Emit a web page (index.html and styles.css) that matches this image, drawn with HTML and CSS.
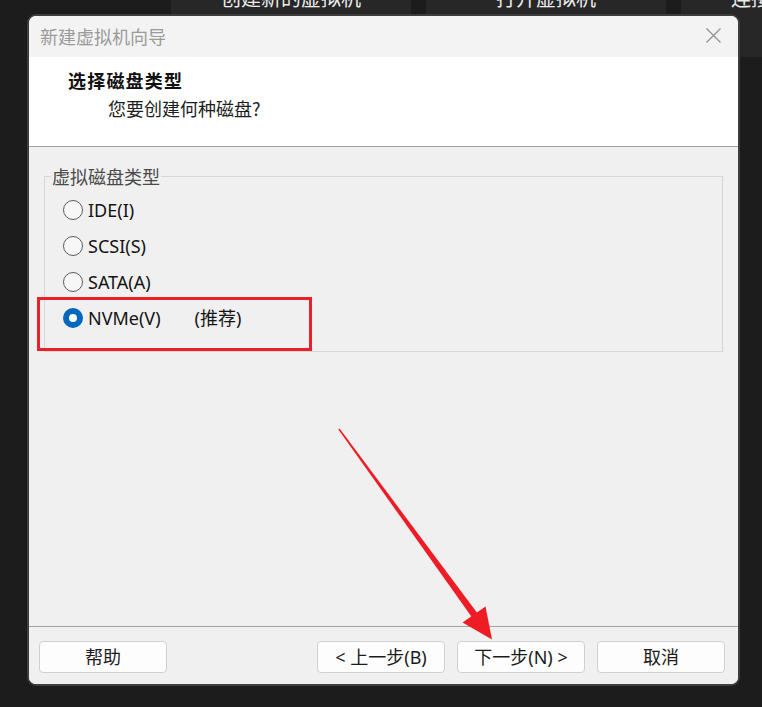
FILE: index.html
```html
<!DOCTYPE html>
<html lang="zh-CN">
<head>
<meta charset="utf-8">
<title>新建虚拟机向导</title>
<link rel="stylesheet" href="styles.css">
</head>
<body>
<div class="desktop">
  <div class="tiles">
    <div class="tile">创建新的虚拟机</div>
    <div class="tile">打开虚拟机</div>
    <div class="tile">连接远程服务器</div>
  </div>

  <div class="dialog">
    <div class="titlebar">
      <span class="title">新建虚拟机向导</span>
      <svg class="close" width="15" height="15" viewBox="0 0 15 15"><path d="M0.5 0.5 L14.5 14.5 M14.5 0.5 L0.5 14.5" stroke="#8e8e8e" stroke-width="1.2" fill="none"/></svg>
    </div>
    <div class="header">
      <div class="h-title">选择磁盘类型</div>
      <div class="h-sub">您要创建何种磁盘?</div>
    </div>
    <div class="content">
      <fieldset class="group">
        <legend>虚拟磁盘类型</legend>
        <div class="radio"><span class="dot"></span><span class="lbl">IDE(I)</span></div>
        <div class="radio"><span class="dot"></span><span class="lbl">SCSI(S)</span></div>
        <div class="radio"><span class="dot"></span><span class="lbl">SATA(A)</span></div>
        <div class="radio"><span class="dot on"></span><span class="lbl">NVMe(V)</span><span class="rec">(推荐)</span></div>
      </fieldset>
    </div>
    <div class="footer">
      <button class="btn">帮助</button>
      <div class="nav">
        <button class="btn">&lt; 上一步(B)</button>
        <button class="btn">下一步(N) &gt;</button>
        <button class="btn">取消</button>
      </div>
    </div>
  </div>

  <div class="highlight"></div>
  <svg class="arrow" width="762" height="707" viewBox="0 0 762 707">
    <polygon points="339.6,428.6 338.4,429.4 472.8,618.6 478.4,614.6" fill="#ee1d25"/>
    <polygon points="492,639.5 462.5,622.5 485.5,606.5" fill="#ee1d25"/>
  </svg>
</div>
</body>
</html>
```
FILE: styles.css
```css
html, body {
  margin: 0;
  padding: 0;
}
body {
  background: #1c1c1c;
  font-family: "Noto Sans", "Noto Sans CJK SC", sans-serif;
  width: 762px;
  height: 707px;
  overflow: hidden;
}
.desktop {
  position: relative;
  width: 762px;
  height: 707px;
}
.tiles {
  display: flex;
  gap: 15px;
  padding-left: 171px;
}
.tile {
  flex: 0 0 240px;
  height: 57px;
  background: #272727;
  color: #ececec;
  font-family: "Noto Sans CJK SC", sans-serif;
  font-size: 20px;
  line-height: 20px;
  text-align: center;
  white-space: nowrap;
  overflow: hidden;
}
.tile::before {
  content: "";
  display: block;
  margin-top: -12px;
}
.tile:nth-child(3) {
  text-align: left;
  padding-left: 50px;
}
.dialog {
  position: absolute;
  left: 27px;
  top: 14px;
  width: 713px;
  height: 672px;
  box-sizing: border-box;
  border: 2px solid #3d3d3d;
  border-radius: 9px;
  overflow: hidden;
  display: flex;
  flex-direction: column;
  background: #f0f0f0;
}
.titlebar {
  box-sizing: border-box;
  height: 41px;
  flex: 0 0 41px;
  background: #f3f3f3;
  display: flex;
  align-items: center;
  justify-content: space-between;
  padding: 0 17px 0 11px;
}
.title {
  font-family: "Noto Sans CJK SC", sans-serif;
  font-size: 18px;
  color: #9a9a9a;
  margin-top: -1px;
}
.close {
  display: block;
  margin-top: -2px;
}
.header {
  box-sizing: border-box;
  flex: 0 0 90px;
  height: 90px;
  background: #ffffff;
  border-bottom: 1px solid #a3a3a3;
  padding: 11px 0 0 39px;
}
.h-title {
  font-family: "Noto Sans CJK SC", sans-serif;
  font-weight: bold;
  font-size: 18px;
  letter-spacing: 1.2px;
  line-height: 24px;
  color: #111;
}
.h-sub {
  font-family: "Noto Sans CJK SC", sans-serif;
  font-size: 18px;
  line-height: 24px;
  color: #1e1e1e;
  padding-left: 40px;
  margin-top: 4px;
}
.content {
  flex: 1 1 auto;
  background: #f0f0f0;
  padding: 19px 15px 0 15px;
}
.group {
  margin: 0;
  padding: 6px 0 15px 18px;
  border: 1px solid #d6d6d6;
  min-width: 0;
}
.group legend {
  font-family: "Noto Sans CJK SC", sans-serif;
  font-size: 18px;
  line-height: 20px;
  color: #4a4a4a;
  padding: 0 1px;
  margin-left: -12px;
}
.radio {
  height: 36px;
  display: flex;
  align-items: center;
}
.dot {
  width: 20px;
  height: 20px;
  box-sizing: border-box;
  border: 1px solid #5c5c5c;
  border-radius: 50%;
  background: #f7f7f7;
  margin-right: 5px;
  flex: 0 0 auto;
}
.dot.on {
  border: 6.5px solid #0067c0;
  background: #ffffff;
}
.lbl {
  font-size: 18px;
  color: #141414;
  line-height: 20px;
}
.rec {
  font-family: "Noto Sans", "Noto Sans CJK SC", sans-serif;
  font-size: 18px;
  color: #141414;
  line-height: 20px;
  margin-left: 34px;
}
.footer {
  box-sizing: border-box;
  flex: 0 0 58px;
  height: 58px;
  border-top: 1px solid #a3a3a3;
  display: flex;
  justify-content: space-between;
  align-items: flex-start;
  padding: 14px 13px 0 10px;
  background: #f0f0f0;
}
.nav {
  display: flex;
  gap: 12px;
}
.btn {
  width: 128px;
  height: 32px;
  background: #fdfdfd;
  border: 1px solid #d0d0d0;
  border-radius: 4px;
  font-family: "Noto Sans", "Noto Sans CJK SC", sans-serif;
  font-size: 18px;
  color: #1b1b1b;
  padding: 0;
  line-height: 30px;
}
.highlight {
  position: absolute;
  left: 37px;
  top: 297px;
  width: 275px;
  height: 54px;
  box-sizing: border-box;
  border: 3px solid #e8202a;
}
.arrow {
  position: absolute;
  left: 0;
  top: 0;
  pointer-events: none;
}
```
